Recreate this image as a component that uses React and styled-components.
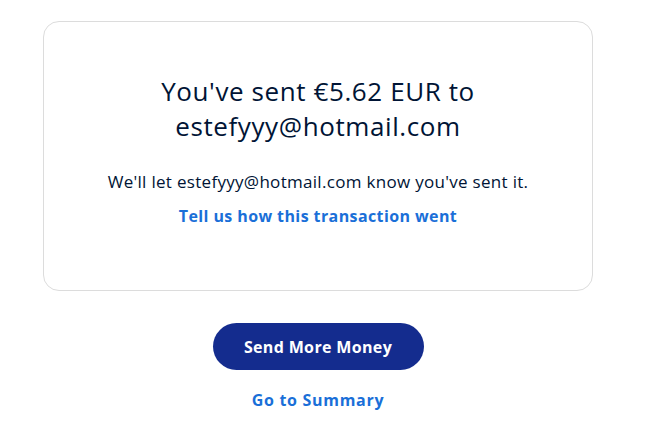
import React from "react";
import styled, { createGlobalStyle } from "styled-components";

const Global = createGlobalStyle`
  html, body { margin: 0; padding: 0; background: #fff; }
  body { font-family: "Open Sans", "Noto Sans", sans-serif; color: #001435; }
`;

const Page = styled.main`
  width: 636px;
  padding-top: 21px;
  display: flex;
  flex-direction: column;
  align-items: center;
`;

const Card = styled.section`
  box-sizing: border-box;
  width: 550px;
  height: 270px;
  border: 1px solid #dcdcdc;
  border-radius: 16px;
  display: flex;
  flex-direction: column;
  align-items: center;
  padding-top: 52px;
`;

const Title = styled.h1`
  margin: 0;
  font-size: 26px;
  font-weight: 400;
  line-height: 35px;
  letter-spacing: 0.6px;
  text-align: center;
  color: #001435;
`;

const Body = styled.p`
  margin: 26px 0 0;
  font-size: 17px;
  line-height: 24px;
  letter-spacing: 0.3px;
  color: #001435;
`;

const Link = styled.a`
  display: block;
  font-size: 16px;
  font-weight: 700;
  line-height: 24px;
  letter-spacing: ${(p) => p.$ls}px;
  color: #1a6fd8;
  text-decoration: none;
  margin-top: ${(p) => p.$mt}px;
`;

const Button = styled.button`
  margin-top: 32px;
  width: 211px;
  height: 47px;
  border: none;
  border-radius: 24px;
  background: #142c8e;
  color: #fff;
  font-family: inherit;
  font-size: 16px;
  font-weight: 700;
  letter-spacing: 0.35px;
`;

export default function App() {
  return (
    <>
      <Global />
      <Page>
        <Card>
          <Title>
            You've sent €5.62 EUR to
            <br />
            estefyyy@hotmail.com
          </Title>
          <Body>We'll let estefyyy@hotmail.com know you've sent it.</Body>
          <Link $mt={10} $ls={0.4}>Tell us how this transaction went</Link>
        </Card>
        <Button>Send More Money</Button>
        <Link $mt={18} $ls={0.7}>Go to Summary</Link>
      </Page>
    </>
  );
}
